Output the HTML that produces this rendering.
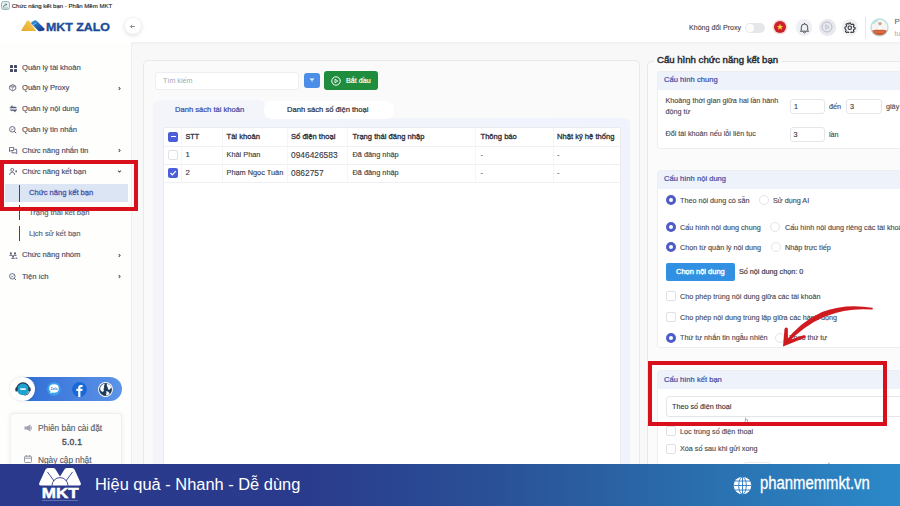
<!DOCTYPE html>
<html><head><meta charset="utf-8">
<style>
*{margin:0;padding:0;box-sizing:border-box}
html,body{width:900px;height:506px;overflow:hidden;background:#f8f8f9;font-family:"Liberation Sans",sans-serif;color:#333}
.a{position:absolute}
.t{position:absolute;white-space:nowrap;line-height:12px;height:12px}
#hdr{left:0;top:0;width:900px;height:43px;background:#fff}
#hb{left:132px;top:42px;width:768px;height:3px;background:linear-gradient(#efeff1,#f8f8f9)}
#side{left:0;top:43px;width:132px;height:463px;background:#fefefd;border-right:1px solid #eeeef0}
.nav{font-size:7.65px;color:#4c5269;-webkit-text-stroke:0.18px #4c5269;letter-spacing:-0.05px}
.ic{position:absolute}
.chev{position:absolute;font-size:9px;color:#666;font-weight:bold}
#card{left:143px;top:60px;width:497px;height:460px;background:#fafafb;border:1px solid #e8e9ec;border-radius:5px}
#tabs{left:152.5px;top:117.5px;width:477.5px;height:400px;background:linear-gradient(90deg,#f3f5fb,#f0f3fc);border-radius:0 6px 6px 6px}
#tab1{left:152.5px;top:100px;width:112px;height:19px;background:#f3f5fb;border-radius:6px 6px 0 0}
#tbl{left:162.5px;top:127px;width:458px;height:360px;background:#fff;border:1px solid #eaebef}
.th{font-size:7.6px;color:#2c2f3a;-webkit-text-stroke:0.3px #2c2f3a}
.td{font-size:7.35px;color:#363944;-webkit-text-stroke:0.12px #363944}
.cb{position:absolute;width:10px;height:10px;border-radius:2px}
.rp{font-size:7.22px;color:#454852;-webkit-text-stroke:0.12px #454852}
.sec{position:absolute;background:#fff;border:1px solid #eceef2;border-radius:3px}
.sech{position:absolute;background:#eef2fb}
.sect{font-size:7.6px;color:#4650a4;-webkit-text-stroke:0.22px #4650a4}
.inp{position:absolute;background:#fff;border:1px solid #e4e6ea;border-radius:3px}
.rad{position:absolute;width:10px;height:10px;border-radius:50%}
.ron{border:3px solid #4d5cc6;background:#fff}
.roff{border:1.3px solid #e3e5ea;background:#fff}
.chk{position:absolute;width:10px;height:10px;border:1px solid #dfe1e6;border-radius:2px;background:#fff}
</style></head>
<body>
<!-- header -->
<div id="hdr" class="a"></div><div id="hb" class="a"></div>
<!-- title bar -->
<svg class="a" style="left:0.8px;top:0.9px" width="9" height="9" viewBox="0 0 9 9"><rect x="0.5" y="0.5" width="8" height="8" rx="2" fill="#e3eff0" stroke="#86a5aa" stroke-width="0.8"/><path d="M2.2 6.3 Q2.5 3.8 5.5 3.5 M4.6 2.5 L5.8 3.5 L4.6 4.5" stroke="#3a5a66" stroke-width="0.7" fill="none"/><path d="M2 7 H7" stroke="#5d7c84" stroke-width="0.5"/></svg>
<div class="t" style="left:11.7px;top:-0.1px;font-size:6.05px;color:#2b2b2b;-webkit-text-stroke:0.15px #2b2b2b">Chức năng kết bạn - Phần Mềm MKT</div>
<!-- logo -->
<svg class="a" style="left:15px;top:14px" width="100" height="24" viewBox="15 14 100 24"><defs><linearGradient id="gy" x1="0" y1="1" x2="1" y2="0"><stop offset="0" stop-color="#e6a526"/><stop offset="1" stop-color="#f8d25a"/></linearGradient><linearGradient id="gb" x1="0" y1="0" x2="0.6" y2="1"><stop offset="0" stop-color="#2f9be6"/><stop offset="1" stop-color="#173f92"/></linearGradient><linearGradient id="gt" x1="0" y1="0" x2="0" y2="1"><stop offset="0" stop-color="#2160ad"/><stop offset="1" stop-color="#133f8a"/></linearGradient></defs>
<path d="M21.3 30.2 L26.8 21.3 Q28 19.6 29.4 21.2 L36.2 31 L22.2 31 Q20.9 31 21.3 30.2Z" fill="url(#gy)"/>
<path d="M31.2 23.6 Q30.8 22.6 31.8 21.9 L34.3 20.4 Q35.6 19.8 36.6 20.8 L44.4 28.6 Q45.2 29.8 44 30.4 L40 31.3 Q38.8 31.6 38 30.6Z" fill="url(#gb)"/>
<path d="M32.6 25.2 L36.4 22.8" stroke="#fff" stroke-width="0.6" opacity="0.8"/>
<text x="46" y="30.7" font-family="Liberation Sans" font-weight="bold" font-size="11.6" fill="url(#gt)" stroke="#1a4a94" stroke-width="0.35" textLength="64" lengthAdjust="spacingAndGlyphs">MKT ZALO</text></svg>
<div class="a" style="left:124.8px;top:18.4px;width:15.8px;height:15.8px;border-radius:50%;background:#fff;box-shadow:0 1px 5px rgba(0,0,0,0.16)"></div>
<svg class="a" style="left:129px;top:23px" width="7" height="7" viewBox="0 0 7 7"><path d="M5.8 3.5 H1.5 M3.2 1.8 L1.5 3.5 L3.2 5.2" stroke="#7a7f8a" stroke-width="0.9" fill="none"/></svg>
<!-- header right -->
<div class="t" style="left:689px;top:21.5px;font-size:7.1px;color:#3d3f47;-webkit-text-stroke:0.1px #3d3f47">Không đổi Proxy</div>
<div class="a" style="left:745px;top:23px;width:19.5px;height:9.5px;border-radius:5px;background:#e6e7eb"></div>
<div class="a" style="left:746px;top:24px;width:8px;height:8px;border-radius:50%;background:#fff"></div>
<div class="a" style="left:774px;top:21px;width:12px;height:12px;border-radius:50%;background:#cc2129;box-shadow:0 0 0 1.5px #f6dadc"></div>
<svg class="a" style="left:776px;top:23px" width="8" height="8" viewBox="0 0 8 8"><path d="M4 0.8 L4.9 3 L7.2 3.1 L5.4 4.5 L6 6.8 L4 5.5 L2 6.8 L2.6 4.5 L0.8 3.1 L3.1 3Z" fill="#f6d33c"/></svg>
<div class="a" style="left:795.5px;top:19px;width:16.5px;height:16.5px;border-radius:50%;background:#eef0f3"></div>
<svg class="a" style="left:798.5px;top:21.5px" width="11" height="12" viewBox="0 0 11 12"><path d="M2.3 8.3 V5.2 Q2.3 2 5.5 2 Q8.7 2 8.7 5.2 V8.3 L9.6 9.2 H1.4Z" stroke="#3a3d45" stroke-width="0.9" fill="none" stroke-linejoin="round"/><path d="M5.5 1 V2 M4.3 10.3 Q5.5 11.6 6.7 10.3" stroke="#3a3d45" stroke-width="0.9" fill="none"/></svg>
<div class="a" style="left:818.5px;top:18.8px;width:17px;height:17px;border-radius:50%;background:#e8e9ee"></div>
<svg class="a" style="left:821px;top:21.3px" width="12" height="12" viewBox="0 0 12 12"><circle cx="6" cy="6" r="5" stroke="#b3b6c6" stroke-width="0.9" fill="none"/><path d="M4.8 3.8 L8 6 L4.8 8.2Z" stroke="#b3b6c6" stroke-width="0.8" fill="none" stroke-linejoin="round"/></svg>
<div class="a" style="left:841.5px;top:19px;width:16.5px;height:16.5px;border-radius:50%;background:#f0f1f3"></div>
<svg class="a" style="left:844px;top:21.7px" width="11.5" height="11.5" viewBox="0 0 24 24"><circle cx="12" cy="12" r="3.6" fill="none" stroke="#2e3138" stroke-width="2.2"/><path d="M10.3 2h3.4l.6 2.6 2 .9 2.3-1.4 2.4 2.4-1.4 2.3.9 2 2.6.6v3.4l-2.6.6-.9 2 1.4 2.3-2.4 2.4-2.3-1.4-2 .9-.6 2.6h-3.4l-.6-2.6-2-.9-2.3 1.4-2.4-2.4 1.4-2.3-.9-2L2 13.7v-3.4l2.6-.6.9-2-1.4-2.3 2.4-2.4 2.3 1.4 2-.9z" fill="none" stroke="#2e3138" stroke-width="2.2" stroke-linejoin="round"/></svg>
<div class="a" style="left:864.5px;top:17px;width:1px;height:21px;background:#e6e7ea"></div>
<svg class="a" style="left:870.3px;top:18px" width="19" height="19" viewBox="0 0 19 19"><circle cx="9.5" cy="9.5" r="9.2" fill="#b9dfe0"/><circle cx="9.5" cy="9.5" r="7.8" fill="#f7f5f1"/><path d="M2.2 12.5 Q9.5 10.5 16.8 12.5 Q15.5 17.2 9.5 17.3 Q3.5 17.2 2.2 12.5Z" fill="#cf5a36"/><path d="M4 14 H15" stroke="#f3c7a8" stroke-width="0.6" stroke-dasharray="1 0.8"/><circle cx="10" cy="5.6" r="1.7" fill="#caa58e"/><path d="M7.5 11.5 Q8 7.8 10 7.8 Q12 7.8 12.5 11.5Z" fill="#fff" stroke="#d8dde0" stroke-width="0.4"/><path d="M3.5 6 Q5 3 8 2.5" stroke="#8ccbcf" stroke-width="0.8" fill="none"/></svg>
<div class="t" style="left:894.5px;top:16px;font-size:8px;color:#555">Ph</div>
<div class="t" style="left:894.5px;top:28px;font-size:7px;color:#aaa">tu</div>

<!-- sidebar -->
<div id="side" class="a"></div>

<!-- sidebar items -->
<svg class="a" style="left:10px;top:64.5px" width="7" height="7" viewBox="0 0 7 7"><rect x="0" y="0" width="3" height="3" rx="0.6" fill="#454b63"/><rect x="4" y="0" width="3" height="3" rx="0.6" fill="#454b63"/><rect x="0" y="4" width="3" height="3" rx="0.6" fill="#454b63"/><rect x="4" y="4" width="3" height="3" rx="0.6" fill="#454b63"/></svg>
<div class="t nav" style="left:22px;top:61.5px">Quản lý tài khoản</div>
<svg class="a" style="left:9.3px;top:84.4px" width="7.4" height="7.4" viewBox="0 0 8 8"><path d="M4 0.6 L7.3 2.3 V5.7 L4 7.4 L0.7 5.7 V2.3Z" fill="none" stroke="#50566e" stroke-width="0.85" stroke-linejoin="round"/><path d="M4 4 L7.3 2.3 M4 4 L0.7 2.3 M4 4 V7.4 M2.3 1.45 L5.6 3.15 M5.7 1.45 L2.4 3.15" fill="none" stroke="#50566e" stroke-width="0.55"/></svg>
<div class="t nav" style="left:22px;top:82px">Quản lý Proxy</div>
<svg class="a" style="left:118px;top:85.5px" width="3" height="5" viewBox="0 0 3 5"><path d="M0.7 1.1 L2.1 2.5 L0.7 3.9" fill="none" stroke="#50545f" stroke-width="1.05"/></svg>
<svg class="a" style="left:8.7px;top:105.2px" width="8.8" height="7.6" viewBox="0 0 9 8"><path d="M0.5 3.3 L3.2 0.5 V2 H6 Q7.5 2 8 3.3" fill="#50566e" stroke="#50566e" stroke-width="0.5" stroke-linejoin="round"/><path d="M8.5 4.7 L5.8 7.5 V6 H3 Q1.5 6 1 4.7" fill="#50566e" stroke="#50566e" stroke-width="0.5" stroke-linejoin="round"/></svg>
<div class="t nav" style="left:22px;top:103px">Quản lý nội dung</div>
<svg class="a" style="left:9.4px;top:126.3px" width="7.6" height="7.6" viewBox="0 0 8 8"><circle cx="3.5" cy="3.5" r="2.9" fill="none" stroke="#50566e" stroke-width="0.9"/><path d="M5.6 5.6 L7.6 7.6" stroke="#50566e" stroke-width="1"/><path d="M2.3 3.6 L3.2 4.4 L4.7 2.6" fill="none" stroke="#50566e" stroke-width="0.7"/></svg>
<div class="t nav" style="left:22px;top:123.5px">Quản lý tin nhắn</div>
<svg class="a" style="left:9.2px;top:146.6px" width="8.4" height="7.4" viewBox="0 0 9 8"><path d="M0.5 0.5 H5 V3.8 H2 L0.5 5 Z" fill="none" stroke="#50566e" stroke-width="0.9" stroke-linejoin="round"/><path d="M3.2 4.6 V6.3 H6.8 L8.3 7.5 V2.5 H5.8" fill="none" stroke="#50566e" stroke-width="0.9" stroke-linejoin="round"/></svg>
<div class="t nav" style="left:22px;top:144.5px">Chức năng nhắn tin</div>
<svg class="a" style="left:118px;top:148px" width="3" height="5" viewBox="0 0 3 5"><path d="M0.7 1.1 L2.1 2.5 L0.7 3.9" fill="none" stroke="#50545f" stroke-width="1.05"/></svg>
<svg class="a" style="left:8.8px;top:168px" width="8.6" height="7.4" viewBox="0 0 9 8"><circle cx="3.3" cy="2" r="1.6" fill="none" stroke="#50566e" stroke-width="0.85"/><path d="M0.5 7.6 Q0.5 4.6 3.3 4.6 Q6.1 4.6 6.1 7.6" fill="none" stroke="#50566e" stroke-width="0.85"/><path d="M6.4 3.6 H9 M7.7 2.3 V4.9" stroke="#50566e" stroke-width="0.8"/></svg>
<div class="t nav" style="left:22px;top:165.5px">Chức năng kết bạn</div>
<svg class="a" style="left:117.2px;top:170.3px" width="5" height="3" viewBox="0 0 5 3"><path d="M1.1 0.7 L2.5 2.1 L3.9 0.7" fill="none" stroke="#50545f" stroke-width="1.05"/></svg>
<div class="a" style="left:5px;top:183.5px;width:122.7px;height:18px;background:#dce5f4;border-radius:1px"></div>
<div class="a" style="left:19px;top:184.5px;width:1.3px;height:17px;background:#3c4470"></div>
<div class="a" style="left:19px;top:205px;width:1.3px;height:15px;background:#3c4470"></div>
<div class="a" style="left:19px;top:225.5px;width:1.3px;height:15px;background:#3c4470"></div>
<div class="t nav" style="left:29px;top:186.8px;color:#4a58ae;-webkit-text-stroke:0.28px #4a58ae">Chức năng kết bạn</div>
<div class="t nav" style="left:29px;top:206.5px;color:#5b6070;-webkit-text-stroke:0.15px #5b6070">Trạng thái kết bạn</div>
<div class="t nav" style="left:29px;top:227.5px;color:#5b6070;-webkit-text-stroke:0.15px #5b6070">Lịch sử kết bạn</div>
<svg class="a" style="left:9.2px;top:251.6px" width="8.4" height="7" viewBox="0 0 9 7.5"><circle cx="2" cy="1.3" r="1.1" fill="#50566e"/><circle cx="6.5" cy="1.3" r="1.1" fill="#50566e"/><path d="M0.3 4 Q0.3 2.7 2 2.7 Q3.7 2.7 3.7 4Z M4.8 4 Q4.8 2.7 6.5 2.7 Q8.2 2.7 8.2 4Z" fill="#50566e"/><circle cx="4.3" cy="4.6" r="1" fill="#50566e"/><path d="M2.3 7.3 Q2.3 5.8 4.3 5.8 Q6.3 5.8 6.3 7.3Z M6.8 7.3 Q6.8 6 8.2 6 Q9 6 9 7.3Z" fill="#50566e"/></svg>
<div class="t nav" style="left:22px;top:249px">Chức năng nhóm</div>
<svg class="a" style="left:118px;top:252.5px" width="3" height="5" viewBox="0 0 3 5"><path d="M0.7 1.1 L2.1 2.5 L0.7 3.9" fill="none" stroke="#50545f" stroke-width="1.05"/></svg>
<svg class="a" style="left:9.4px;top:272.6px" width="7.6" height="7.6" viewBox="0 0 8 8"><circle cx="3.5" cy="3.5" r="2.9" fill="none" stroke="#50566e" stroke-width="0.9"/><path d="M5.6 5.6 L7.6 7.6" stroke="#50566e" stroke-width="1"/><path d="M2.3 3.6 L3.2 4.4 L4.7 2.6" fill="none" stroke="#50566e" stroke-width="0.7"/></svg>
<div class="t nav" style="left:22px;top:270.5px">Tiện ích</div>
<svg class="a" style="left:118px;top:274px" width="3" height="5" viewBox="0 0 3 5"><path d="M0.7 1.1 L2.1 2.5 L0.7 3.9" fill="none" stroke="#50545f" stroke-width="1.05"/></svg>
<!-- red box sidebar -->
<div class="a" style="left:0px;top:160px;width:138px;height:50.5px;border:4px solid #d8101c"></div>
<!-- social pill -->
<div class="a" style="left:12px;top:376.7px;width:110px;height:24.5px;border-radius:12.5px;background:linear-gradient(90deg,#2b6ad4,#4f87e2 70%,#5c94e8)"></div>
<div class="a" style="left:10.3px;top:376.7px;width:24.6px;height:24.6px;border-radius:50%;background:#fff;box-shadow:0 0 3px rgba(0,0,0,0.12)"></div>
<svg class="a" style="left:13.6px;top:380px" width="18" height="18" viewBox="0 0 18 18"><circle cx="9" cy="9" r="6.2" fill="#1ea3cf"/><path d="M2.6 9.5 A6.4 6.6 0 0 1 15.4 9.5" fill="none" stroke="#243a55" stroke-width="1.2"/><rect x="1.3" y="7.6" width="2.4" height="4" rx="1.1" fill="#243a55"/><rect x="14.3" y="7.6" width="2.4" height="4" rx="1.1" fill="#243a55"/><path d="M15.5 11.5 Q15 15 10.5 15.3" fill="none" stroke="#243a55" stroke-width="0.8"/><rect x="6" y="8.3" width="6" height="1.6" rx="0.8" fill="#e8f6fb"/></svg>
<svg class="a" style="left:47px;top:382.3px" width="14" height="14" viewBox="0 0 14 14"><circle cx="7" cy="7" r="6.8" fill="#3aa0f0"/><path d="M7 2.3 Q11.8 2.3 11.8 6.6 Q11.8 10.8 7 10.8 Q6 10.8 5.2 10.5 L3.2 11.5 L3.6 9.6 Q2.2 8.4 2.2 6.6 Q2.2 2.3 7 2.3Z" fill="#fff"/><text x="7" y="7.8" font-size="3.4" text-anchor="middle" fill="#1f80d8" font-family="Liberation Sans" font-weight="bold">Zalo</text></svg>
<svg class="a" style="left:71.8px;top:381.6px" width="15" height="15" viewBox="0 0 15 15"><circle cx="7.5" cy="7.5" r="7.4" fill="#1868d6"/><path d="M8.4 15 V8.9 H10.3 L10.6 6.8 H8.4 V5.6 Q8.4 4.9 9.2 4.9 H10.6 V3.1 Q9.7 2.9 8.9 2.9 Q6.2 2.9 6.2 5.6 V6.8 H4.3 V8.9 H6.2 V15Z" fill="#fff"/></svg>
<svg class="a" style="left:97.5px;top:381.5px" width="15" height="15" viewBox="0 0 15 15"><circle cx="7.5" cy="7.5" r="7.4" fill="#fff"/><circle cx="7.5" cy="7.5" r="6.4" fill="#1f3b5e"/><path d="M2.2 5.5 Q3.5 2.5 6.5 1.6 Q7 3 5.8 4.2 Q6.8 5.5 5.5 6.8 Q6.5 8.5 5 10 Q3 9.5 2.2 7.5Z M8.8 1.4 Q12.5 2.5 13.6 6 Q12 6.2 11.3 8 Q9.5 7.5 9.8 5.5 Q8.5 4 8.8 1.4Z M8.3 9 Q10.8 9.2 11.6 11.8 Q10 13.5 8 13.6 Q8.8 11.5 8.3 9Z" fill="#fff"/></svg>
<!-- version box -->
<div class="a" style="left:9.5px;top:412.5px;width:112px;height:70px;background:#fdfdfc;border:1px solid #f0f0f0;border-radius:4px;box-shadow:0 0 4px rgba(0,0,0,0.07)"></div>
<svg class="a" style="left:24px;top:424px" width="8" height="8" viewBox="0 0 8 8"><path d="M0.5 2.5 H3 L6.5 0.5 V7.5 L3 5.5 H0.5Z" fill="#a0a3ad"/><rect x="6.8" y="2.5" width="1" height="3" fill="#a0a3ad"/></svg>
<div class="t" style="left:38px;top:422px;font-size:8.3px;color:#5a5e6a;-webkit-text-stroke:0.15px #5a5e6a">Phiên bản cài đặt</div>
<div class="t" style="left:62px;top:435.8px;font-size:8.6px;color:#50545f;-webkit-text-stroke:0.4px #50545f;letter-spacing:0.2px">5.0.1</div>
<svg class="a" style="left:24px;top:455px" width="8" height="8" viewBox="0 0 8 8"><rect x="0.5" y="1.2" width="7" height="6.3" rx="1" fill="none" stroke="#8c909b" stroke-width="0.9"/><path d="M0.5 3.2 H7.5 M2.3 0 V2 M5.7 0 V2" stroke="#8c909b" stroke-width="0.9"/></svg>
<div class="t" style="left:38px;top:453.5px;font-size:8.3px;color:#5a5e6a;-webkit-text-stroke:0.15px #5a5e6a">Ngày cập nhật</div>

<!-- main card -->
<div id="card" class="a"></div>
<div class="inp" style="left:155px;top:71.5px;width:144px;height:18.5px;border-color:#eceef1"></div>
<div class="t" style="left:163px;top:75px;font-size:7.2px;color:#a4a7b0">Tìm kiếm</div>
<div class="a" style="left:303.7px;top:73px;width:16px;height:14.6px;border-radius:3px;background:#4a8ee8"></div>
<svg class="a" style="left:307.7px;top:76.3px" width="8" height="8" viewBox="0 0 8 8"><path d="M1.3 2.6 H6.7 L4.4 4.6 V6.2 L3.6 5.6 V4.6Z" fill="#fff" opacity="0.9"/></svg>
<div class="a" style="left:324px;top:71px;width:54px;height:19px;border-radius:3px;background:#1f8d3d"></div>
<svg class="a" style="left:331px;top:75.5px" width="10" height="10" viewBox="0 0 10 10"><circle cx="5" cy="5" r="4.2" fill="none" stroke="#fff" stroke-width="1"/><path d="M4 3.2 L6.8 5 L4 6.8Z" fill="none" stroke="#fff" stroke-width="0.9"/></svg>
<div class="t" style="left:346px;top:74.5px;font-size:7.2px;color:#fff;-webkit-text-stroke:0.2px #fff">Bắt đầu</div>
<div id="tabs" class="a"></div><div id="tab1" class="a"></div>
<div class="a" style="left:263.5px;top:100.7px;width:130px;height:18.8px;border-radius:8px;background:#fff"></div>
<div class="t" style="left:175px;top:103.5px;font-size:7.6px;color:#3c4ca8;-webkit-text-stroke:0.22px #3c4ca8">Danh sách tài khoản</div>
<div class="t" style="left:287px;top:103.5px;font-size:7.6px;color:#2d3040;-webkit-text-stroke:0.22px #2d3040">Danh sách số điện thoại</div>
<div id="tbl" class="a"></div>
<div class="a" style="left:164px;top:145.5px;width:456px;height:1px;background:#eff0f3"></div>
<div class="a" style="left:164px;top:163.5px;width:456px;height:1px;background:#eff0f3"></div>
<div class="a" style="left:164px;top:181.5px;width:456px;height:1px;background:#eff0f3"></div>
<div class="a" style="left:181px;top:128px;width:1px;height:53.5px;background:#f4f5f7"></div>
<div class="a" style="left:222px;top:128px;width:1px;height:53.5px;background:#f4f5f7"></div>
<div class="a" style="left:287px;top:128px;width:1px;height:53.5px;background:#f4f5f7"></div>
<div class="a" style="left:347px;top:128px;width:1px;height:53.5px;background:#f4f5f7"></div>
<div class="a" style="left:475px;top:128px;width:1px;height:53.5px;background:#f4f5f7"></div>
<div class="a" style="left:553px;top:128px;width:1px;height:53.5px;background:#f4f5f7"></div>
<div class="cb" style="left:168px;top:131.5px;background:#4d5fd8"></div>
<div class="a" style="left:170.5px;top:136px;width:5px;height:1.2px;background:#fff"></div>
<div class="cb" style="left:168px;top:149.5px;background:#fff;border:1px solid #dfe1e6"></div>
<div class="cb" style="left:168px;top:167.5px;background:#4d5fd8"></div>
<svg class="a" style="left:168px;top:167.5px" width="10" height="10" viewBox="0 0 10 10"><path d="M2.5 5 L4.3 6.8 L7.8 3.2" fill="none" stroke="#fff" stroke-width="1.2"/></svg>
<div class="t th" style="left:185.5px;top:130.5px;font-size:7.2px">STT</div>
<div class="t th" style="left:226.5px;top:130.5px">Tài khoản</div>
<div class="t th" style="left:291px;top:130.5px">Số điện thoại</div>
<div class="t th" style="left:352.5px;top:130.5px">Trạng thái đăng nhập</div>
<div class="t th" style="left:480.5px;top:130.5px">Thông báo</div>
<div class="t th" style="left:557px;top:130.5px">Nhật ký hệ thống</div>
<div class="t td" style="left:185.5px;top:149.2px;font-size:7.8px">1</div>
<div class="t td" style="left:226.5px;top:149.4px">Khải Phan</div>
<div class="t td" style="left:291px;top:148.9px;font-size:8.4px">0946426583</div>
<div class="t td" style="left:352.5px;top:149.4px">Đã đăng nhập</div>
<div class="t td" style="left:480.5px;top:149.4px">-</div>
<div class="t td" style="left:557px;top:149.4px">-</div>
<div class="t td" style="left:185.5px;top:167.2px;font-size:7.8px">2</div>
<div class="t td" style="left:226.5px;top:167.4px">Phạm Ngọc Tuân</div>
<div class="t td" style="left:291px;top:166.9px;font-size:8.4px">0862757</div>
<div class="t td" style="left:352.5px;top:167.4px">Đã đăng nhập</div>
<div class="t td" style="left:480.5px;top:167.4px">-</div>
<div class="t td" style="left:557px;top:167.4px">-</div>

<!-- right panel -->
<div class="a" style="left:647px;top:60.5px;width:260px;height:460px;background:#fbfbfb;border:1px solid #e6e7ea;border-radius:5px"></div>
<div class="a" style="left:654px;top:59px;width:128px;height:3px;background:#fafafa"></div>
<div class="t" style="left:657px;top:53.3px;font-size:9.6px;line-height:13px;height:13px;color:#2a2c33;-webkit-text-stroke:0.45px #2a2c33">Cấu hình chức năng kết bạn</div>

<div class="sec" style="left:657px;top:71px;width:260px;height:78px"></div>
<div class="sech" style="left:658px;top:72px;width:260px;height:18px"></div>
<div class="t sect" style="left:664px;top:74px">Cấu hình chung</div>
<div class="t rp" style="left:665.5px;top:95.3px">Khoảng thời gian giữa hai lần hành</div>
<div class="t rp" style="left:665.5px;top:106px">động từ</div>
<div class="inp" style="left:790px;top:99px;width:35px;height:15px"></div>
<div class="t rp" style="left:794px;top:100.5px;color:#333">1</div>
<div class="t rp" style="left:829px;top:100.5px">đến</div>
<div class="inp" style="left:846px;top:99px;width:35.5px;height:15px"></div>
<div class="t rp" style="left:850px;top:100.5px;color:#333">3</div>
<div class="t rp" style="left:886px;top:100.5px">giây</div>
<div class="t rp" style="left:665.5px;top:128px">Đổi tài khoản nếu lỗi liên tục</div>
<div class="inp" style="left:789.5px;top:127px;width:35.5px;height:15px"></div>
<div class="t rp" style="left:793.5px;top:128.5px;color:#333">3</div>
<div class="t rp" style="left:829px;top:128.5px">lần</div>

<div class="sec" style="left:657px;top:170px;width:260px;height:178px"></div>
<div class="sech" style="left:658px;top:171px;width:260px;height:18px"></div>
<div class="t sect" style="left:664px;top:173px">Cấu hình nội dung</div>
<div class="rad ron" style="left:666px;top:195px"></div>
<div class="t rp" style="left:680px;top:194.5px">Theo nội dung có sẵn</div>
<div class="rad roff" style="left:759px;top:195px"></div>
<div class="t rp" style="left:773px;top:194.5px">Sử dụng AI</div>
<div class="rad ron" style="left:666px;top:222px"></div>
<div class="t rp" style="left:680px;top:221.5px">Cấu hình nội dung chung</div>
<div class="rad roff" style="left:770px;top:222px"></div>
<div class="t rp" style="left:785px;top:221.5px">Cấu hình nội dung riêng các tài khoản</div>
<div class="rad ron" style="left:666px;top:242px"></div>
<div class="t rp" style="left:680px;top:241.5px">Chọn từ quản lý nội dung</div>
<div class="rad roff" style="left:771px;top:242px"></div>
<div class="t rp" style="left:785px;top:241.5px">Nhập trực tiếp</div>
<div class="a" style="left:665.5px;top:263px;width:69.5px;height:18px;border-radius:2px;background:#3190e2"></div>
<div class="t" style="left:676px;top:265.5px;font-size:7.5px;color:#fff;-webkit-text-stroke:0.35px #fff">Chọn nội dung</div>
<div class="t rp" style="left:739px;top:265.5px;color:#3a3d45;-webkit-text-stroke:0.2px #3a3d45">Số nội dung chọn: 0</div>
<div class="chk" style="left:666px;top:291px"></div>
<div class="t rp" style="left:680px;top:290.5px">Cho phép trùng nội dung giữa các tài khoản</div>
<div class="chk" style="left:666px;top:312px"></div>
<div class="t rp" style="left:680px;top:311.5px">Cho phép nội dung trùng lặp giữa các hành động</div>
<div class="rad ron" style="left:666px;top:332.5px"></div>
<div class="t rp" style="left:680px;top:332px">Thứ tự nhắn tin ngẫu nhiên</div>
<div class="rad roff" style="left:775px;top:332.5px"></div>
<div class="t rp" style="left:789px;top:332px">Theo thứ tự</div>

<div class="sec" style="left:657px;top:370px;width:260px;height:150px"></div>
<div class="sech" style="left:658px;top:371px;width:260px;height:18px"></div>
<div class="t sect" style="left:664px;top:374px">Cấu hình kết bạn</div>
<div class="inp" style="left:666px;top:395.5px;width:240px;height:21.5px"></div>
<div class="t rp" style="left:672px;top:400.5px;color:#2a2d36">Theo số điện thoại</div>
<div class="chk" style="left:666px;top:426px"></div>
<div class="t rp" style="left:680px;top:425.5px">Lọc trùng số điện thoại</div>
<div class="chk" style="left:666px;top:443.5px"></div>
<div class="t rp" style="left:680px;top:443px">Xóa số sau khi gửi xong</div>
<div class="a" style="left:744px;top:461.5px;width:27px;height:8px;border:1px solid #ebecef;border-radius:2px;background:#fff"></div>
<div class="t rp" style="left:775px;top:461px;color:#8a8d96">Thời gian chờ kết bạn</div>
<svg class="a" style="left:743.5px;top:417px" width="5" height="6" viewBox="0 0 5 6"><path d="M1.5 0.5 V4 M1.5 2.5 H3.5 V5.5 H1 Z" stroke="#9a9aa0" stroke-width="0.7" fill="#fff"/></svg>
<!-- red box right -->
<div class="a" style="left:647.8px;top:361.3px;width:239px;height:65px;border:4px solid #d8101c"></div>
<!-- arrow -->
<svg class="a" style="left:770px;top:295px" width="115" height="60" viewBox="770 295 115 60"><path d="M872.5 307.8 Q873.5 309.6 871.5 309.6 Q848 307.5 825 316.5 Q804 325.5 786.5 344 L784.5 342.5 Q800 322 822 312 Q846 303 872.5 307.8Z" fill="#cf1a20"/><path d="M783 346.5 L784.5 329 Q786 326.5 787.8 328.5 L788 340.5 L803.5 335.2 Q806.5 334.8 805.5 337.5 Z" fill="#cf1a20"/></svg>

<!-- bottom band -->
<div class="a" style="left:0;top:464px;width:900px;height:42px;background:linear-gradient(90deg,#2a398b 0%,#2a3a8c 33%,#2a5298 56%,#2a6fae 78%,#2b89c9 100%)"></div>
<svg class="a" style="left:30px;top:464px" width="60" height="42" viewBox="30 464 60 42"><path d="M40.8 485.4 Q38.5 485.4 39.3 483 L45.5 469.5 Q46.3 468 48 468 L53 468 Q54.6 468 55.6 469.4 L60 476.4 L64.4 469.4 Q65.4 468 67 468 L72 468 Q73.7 468 74.5 469.5 L80.7 483 Q81.5 485.4 79.2 485.4Z" fill="#fff"/><g fill="none" stroke="#2a398b" stroke-width="0.9"><path d="M47.4 471.9 L54.1 481 M72.6 471.9 L65.9 481"/><path d="M52 485.6 A8 8 0 0 1 68 485.6"/></g><text x="60.3" y="498" text-anchor="middle" font-family="Liberation Sans" font-weight="bold" font-size="15.5" fill="#fff" stroke="#fff" stroke-width="0.5" textLength="37" lengthAdjust="spacingAndGlyphs">MKT</text><rect x="42" y="500.3" width="36" height="0.7" fill="#aeb8e0" opacity="0.6"/></svg>
<div class="t" style="left:95px;top:473.5px;font-size:17.2px;line-height:20px;height:20px;color:#fff;transform:scaleX(0.955);transform-origin:0 0">Hiệu quả - Nhanh - Dễ dùng</div>
<svg class="a" style="left:732.5px;top:475.5px" width="19" height="19" viewBox="0 0 19 19"><circle cx="9.5" cy="9.5" r="8.8" fill="#fff"/><g fill="none" stroke="#2a78bf" stroke-width="0.9"><ellipse cx="9.5" cy="9.5" rx="3.8" ry="8.8"/><path d="M9.5 0.7 V18.3 M0.7 9.5 H18.3 M2 5 H17 M2 14 H17"/></g></svg>
<div class="t" style="left:759.5px;top:473.3px;font-size:18px;line-height:20px;height:20px;color:#fff;-webkit-text-stroke:0.3px #fff;transform:scaleX(0.825);transform-origin:0 0">phanmemmkt.vn</div>
</body></html>
